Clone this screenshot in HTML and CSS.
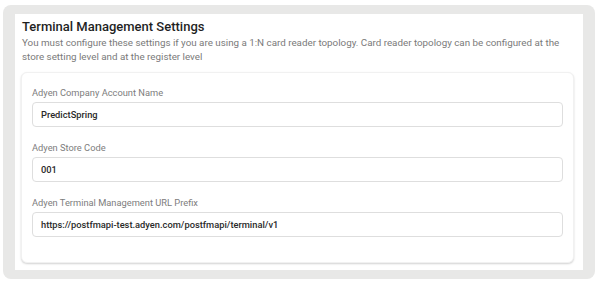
FILE: index.html
```html
<!DOCTYPE html>
<html lang="en">
  <head>
    <meta charset="UTF-8" />
    <meta name="viewport" content="width=device-width, initial-scale=1.0" />
    <title>Terminal Management Settings</title>
    <link rel="stylesheet" href="styles.css">
  </head>
  <body>
    <div class="frame">
      <div class="panel">
        <h2 class="title">Terminal Management Settings</h2>
        <p class="description">
          You must configure these settings if you are using a 1:N card reader
          topology. Card reader topology can be configured at the store setting
          level and at the register level
        </p>

        <div class="card">
          <div class="field">
            <label class="field-label">Adyen Company Account Name</label>
            <div class="field-input">PredictSpring</div>
          </div>
          <div class="field">
            <label class="field-label">Adyen Store Code</label>
            <div class="field-input">001</div>
          </div>
          <div class="field">
            <label class="field-label">Adyen Terminal Management URL Prefix</label>
            <div class="field-input">https://postfmapi-test.adyen.com/postfmapi/terminal/v1</div>
          </div>
        </div>
      </div>
    </div>
  </body>
</html>
```

FILE: styles.css
```css
* {
  margin: 0;
  padding: 0;
  box-sizing: border-box;
}

body {
  font-family: Roboto, "Liberation Sans", Arial, sans-serif;
  background: #ffffff;
  color: #212121;
  width: 600px;
  height: 284px;
  padding: 5px 5px 0 3px;
}

.frame {
  background: #e8e8e7;
  border-radius: 8px;
  height: 274px;
  padding: 9px 12px 9px 12px;
}

.panel {
  background: #ffffff;
  height: 100%;
  padding: 4px 9px 0 6px;
}

.title {
  font-size: 13px;
  font-weight: 500;
  line-height: 18px;
  color: #1f1f1f;
  padding-left: 1px;
}

.description {
  font-size: 9.8px;
  line-height: 14px;
  color: #7a7a7a;
  padding-left: 1px;
  margin-bottom: 8px;
}

.card {
  background: #ffffff;
  border: 1px solid #f1f1f1;
  border-radius: 6px;
  box-shadow: 0 1px 2px rgba(0, 0, 0, 0.18);
  padding: 13px 10px 25px 10px;
  height: 191px;
}

.field {
  margin-bottom: 14px;
}

.field:last-child {
  margin-bottom: 0;
}

.field-label {
  display: block;
  font-size: 9.3px;
  line-height: 14px;
  color: #7d7d7d;
  margin-bottom: 2px;
}

.field-input {
  height: 25px;
  border: 1px solid #dedede;
  border-radius: 4px;
  padding: 0 8px;
  font-size: 9.3px;
  font-weight: 500;
  line-height: 23px;
  color: #2a2a2a;
}
```
